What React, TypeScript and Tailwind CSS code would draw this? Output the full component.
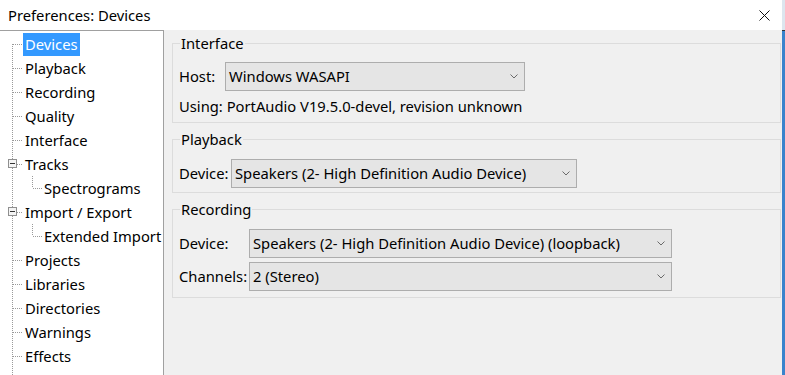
import React from "react";

type TreeItem = { label: string; kind: "top" | "parent" | "child"; selected?: boolean };

const TREE: TreeItem[] = [
  { label: "Devices", kind: "top", selected: true },
  { label: "Playback", kind: "top" },
  { label: "Recording", kind: "top" },
  { label: "Quality", kind: "top" },
  { label: "Interface", kind: "top" },
  { label: "Tracks", kind: "parent" },
  { label: "Spectrograms", kind: "child" },
  { label: "Import / Export", kind: "parent" },
  { label: "Extended Import", kind: "child" },
  { label: "Projects", kind: "top" },
  { label: "Libraries", kind: "top" },
  { label: "Directories", kind: "top" },
  { label: "Warnings", kind: "top" },
  { label: "Effects", kind: "top" },
  { label: "Keyboard", kind: "top" },
];

const DOT = "#9a9a9a";

function Connector({ item, first }: { item: TreeItem; first: boolean }) {
  const w = item.kind === "child" ? 42 : 23;
  return (
    <svg width={w} height={24} className="shrink-0" shapeRendering="crispEdges">
      <line x1={12.5} y1={first ? 12 : 0} x2={12.5} y2={24} stroke={DOT} strokeDasharray="1 1" />
      {item.kind === "child" ? (
        <>
          <line x1={32.5} y1={0} x2={32.5} y2={12} stroke={DOT} strokeDasharray="1 1" />
          <line x1={33} y1={12.5} x2={42} y2={12.5} stroke={DOT} strokeDasharray="1 1" />
        </>
      ) : (
        <line x1={13} y1={12.5} x2={23} y2={12.5} stroke={DOT} strokeDasharray="1 1" />
      )}
      {item.kind === "parent" && (
        <>
          <rect x={8.5} y={7.5} width={8} height={8} fill="#f4f4f4" stroke="#8f8f8f" />
          <line x1={10} y1={11.5} x2={15} y2={11.5} stroke="#333" />
        </>
      )}
    </svg>
  );
}

function Tree() {
  return (
    <div className="w-[164px] shrink-0 bg-white border-t border-r border-[#a0a0a0] pt-[1px] overflow-hidden">
      {TREE.map((item, i) => (
        <div key={item.label} className="flex h-[24px] items-center">
          <Connector item={item} first={i === 0} />
          <span
            className={
              item.selected
                ? "bg-[#3399ff] text-white px-[2px] h-[23px] leading-[23px] whitespace-nowrap"
                : "text-black px-[2px] leading-[23px] whitespace-nowrap"
            }
          >
            {item.label}
          </span>
        </div>
      ))}
    </div>
  );
}

function Chevron() {
  return (
    <svg width="8" height="5" viewBox="0 0 8 5" className="shrink-0">
      <path d="M0.5 0.5 L4 4 L7.5 0.5" fill="none" stroke="#6a6a6a" strokeWidth="1" />
    </svg>
  );
}

function Select({ value, width }: { value: string; width: string }) {
  return (
    <div
      className={`${width} h-[29px] flex items-center justify-between bg-[#e5e5e5] border border-[#adadad] pl-[3px] pr-[6px]`}
    >
      <span className="whitespace-nowrap">{value}</span>
      <Chevron />
    </div>
  );
}

function Group({ title, children, className }: { title: string; children: React.ReactNode; className?: string }) {
  return (
    <fieldset className={`border border-[#dcdcdc] px-[6px] ${className ?? ""}`}>
      <legend className="ml-[1px] px-[1px] leading-[20px]">{title}</legend>
      {children}
    </fieldset>
  );
}

export default function App() {
  return (
    <div
      className="w-[785px] h-[375px] overflow-hidden flex text-[14.75px] text-black"
      style={{ fontFamily: '"Noto Sans", "Open Sans", sans-serif' }}
    >
      <div className="w-[782px] flex flex-col bg-[#f0f0f0]">
        {/* Title bar */}
        <div className="h-[30px] shrink-0 bg-white flex items-center justify-between pl-[8px] pr-[12px]">
          <span className="whitespace-nowrap">Preferences: Devices</span>
          <svg width="11" height="11" viewBox="0 0 11 11">
            <path d="M0.5 0.5 L10.5 10.5 M10.5 0.5 L0.5 10.5" stroke="#111" strokeWidth="1" />
          </svg>
        </div>

        <div className="flex flex-1 min-h-0">
          <Tree />

          {/* Settings */}
          <div className="flex-1 pl-[8px] pr-[1px] pt-[3px] flex flex-col">
            <Group title="Interface" className="pb-[6px]">
              <div className="flex items-center mt-[9px]">
                <span className="w-[46px] shrink-0">Host:</span>
                <Select value="Windows WASAPI" width="w-[300px]" />
              </div>
              <div className="mt-[5px] leading-[20px]">Using: PortAudio V19.5.0-devel, revision unknown</div>
            </Group>

            <Group title="Playback" className="mt-[6px] pb-[4px]">
              <div className="flex items-center mt-[10px]">
                <span className="w-[52px] shrink-0">Device:</span>
                <Select value="Speakers (2- High Definition Audio Device)" width="w-[346px]" />
              </div>
            </Group>

            <Group title="Recording" className="mt-[6px] pb-[6px]">
              <div className="grid grid-cols-[70px_423px] items-center gap-y-[4px] mt-[10px]">
                <span>Device:</span>
                <Select value="Speakers (2- High Definition Audio Device) (loopback)" width="w-[423px]" />
                <span>Channels:</span>
                <Select value="2 (Stereo)" width="w-[423px]" />
              </div>
            </Group>
          </div>
        </div>
      </div>

      {/* neighbouring window edge */}
      <div className="w-[3px] flex flex-col">
        <div className="h-[31px] bg-[#dde6ef] border-b border-[#333]" />
        <div className="flex-1 bg-[#3a83cc]" />
      </div>
    </div>
  );
}
